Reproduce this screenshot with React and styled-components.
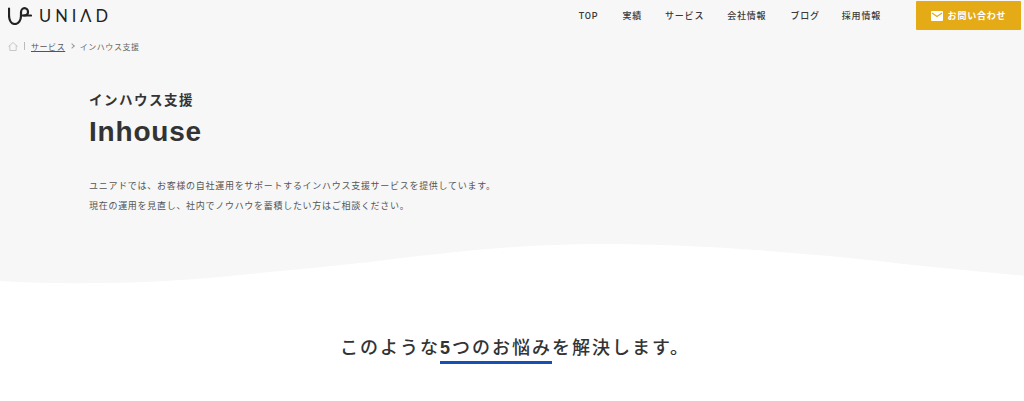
import React from 'react'
import styled, { createGlobalStyle } from 'styled-components'

const GlobalStyle = createGlobalStyle`
  html, body {
    margin: 0;
    padding: 0;
    background: #fff;
    overflow: hidden;
  }
  body {
    font-family: "Liberation Sans", "Noto Sans CJK JP", sans-serif;
    color: #333;
  }
`

const Hero = styled.div`
  background: #f7f7f7;
`

const Header = styled.header`
  display: flex;
  align-items: flex-start;
  justify-content: space-between;
  height: 31px;
  padding: 1px 3px 0 8px;
  box-sizing: border-box;
`

const Logo = styled.a`
  display: flex;
  align-items: center;
  gap: 7px;
  height: 30px;
  color: #222;
`

const LogoText = styled.span`
  font-family: "Lato", sans-serif;
  font-size: 16.5px;
  font-weight: 400;
  letter-spacing: 4px;
`

const Nav = styled.nav`
  display: flex;
  align-items: center;
  height: 29px;
`

const NavItem = styled.a`
  font-family: "Roboto", "Noto Sans CJK JP", sans-serif;
  font-size: 9px;
  font-weight: 500;
  letter-spacing: 0.8px;
  color: #3a3a3a;
  margin-right: ${(p) => p.$gap}px;
  white-space: nowrap;
`

const ContactButton = styled.a`
  display: flex;
  align-items: center;
  justify-content: center;
  gap: 5px;
  width: 105px;
  height: 29px;
  background: #e5ab17;
  color: #fff;
  font-size: 9px;
  font-weight: 700;
  letter-spacing: 0.8px;
  border-radius: 1px;
`

const Breadcrumb = styled.div`
  display: flex;
  align-items: center;
  height: 30px;
  padding-left: 8px;
  font-size: 8px;
  letter-spacing: 0.55px;
  color: #666;
`

const Divider = styled.span`
  width: 1px;
  height: 8px;
  background: #bbb;
  margin: 0 6px;
`

const CrumbLink = styled.a`
  color: #555;
  text-decoration: underline;
`

const Chevron = styled.span`
  width: 3px;
  height: 3px;
  border-top: 1px solid #999;
  border-right: 1px solid #999;
  transform: rotate(45deg);
  margin: 0 5.5px 0 5px;
`

const HeroBody = styled.div`
  padding: 30px 0 0 89px;
`

const SubTitle = styled.div`
  font-size: 13.5px;
  font-weight: 700;
  line-height: 20px;
  letter-spacing: 1.5px;
  color: #333;
`

const Title = styled.h1`
  margin: 3px 0 0;
  font-size: 28px;
  font-weight: 700;
  line-height: 36px;
  letter-spacing: 0.8px;
  color: #333;
`

const Lead = styled.p`
  margin: 26px 0 0;
  font-size: 9px;
  line-height: 20px;
  letter-spacing: 0.71px;
  color: #555;
`

const Wave = styled.svg`
  display: block;
  width: 100%;
  height: 50px;
  margin-top: 24px;
`

const Section = styled.section`
  background: #fff;
  display: flex;
  justify-content: center;
  padding: 45px 0 0 6px;
`

const Heading = styled.h2`
  margin: 0;
  font-size: 18px;
  font-weight: 500;
  line-height: 26px;
  letter-spacing: 2px;
  color: #333;
`

const Marked = styled.span`
  display: inline-block;
  border-bottom: 3px solid #1650b4;
`

const Digit = styled.b`
  font-weight: 700;
`

const navItems = [
  { label: 'TOP', gap: 24 },
  { label: '実績', gap: 23 },
  { label: 'サービス', gap: 23 },
  { label: '会社情報', gap: 24 },
  { label: 'ブログ', gap: 22 },
  { label: '採用情報', gap: 35 },
]

export default function App() {
  return (
    <>
      <GlobalStyle />
      <Hero>
        <Header>
          <Logo>
            <svg width="24" height="18" viewBox="8 7 24 18" fill="none" stroke="#222" strokeWidth="2.2" strokeLinecap="round">
              <path d="M9 8.500V15C9 20.500 11.500 24 15 24C18.500 24 21 20.500 21 16V12.500C21 10 22.500 8.200 24.500 8.200C26.500 8.200 28 10 28 12C28 14.500 26 15.500 24 15.500" />
              <path d="M21 15.500H31" />
            </svg>
            <LogoText>UNIΛD</LogoText>
          </Logo>
          <Nav>
            {navItems.map((item) => (
              <NavItem key={item.label} $gap={item.gap}>{item.label}</NavItem>
            ))}
            <ContactButton>
              <svg width="12" height="10" viewBox="0 0 12 10">
                <rect width="12" height="10" rx="1" fill="#fff" />
                <path d="M1 2l5 3.500L11 2" fill="none" stroke="#e5ab17" strokeWidth="1.200" />
              </svg>
              お問い合わせ
            </ContactButton>
          </Nav>
        </Header>
        <Breadcrumb>
          <svg width="10" height="9" viewBox="0 0 10 9" fill="none" stroke="#bbb" strokeWidth="0.8">
            <path d="M0.500 4.500L5 0.500L9.500 4.500M1.800 3.500v5h6.400v-5" />
          </svg>
          <Divider />
          <CrumbLink>サービス</CrumbLink>
          <Chevron />
          インハウス支援
        </Breadcrumb>
        <HeroBody>
          <SubTitle>インハウス支援</SubTitle>
          <Title>Inhouse</Title>
          <Lead>
            ユニアドでは、お客様の自社運用をサポートするインハウス支援サービスを提供しています。
            <br />
            現在の運用を見直し、社内でノウハウを蓄積したい方はご相談ください。
          </Lead>
        </HeroBody>
        <Wave viewBox="0 0 1024 50" preserveAspectRatio="none">
          <path
            d="M0 41C40 43.500 80 43.500 120 42.700C170 41.500 210 38 250 34C290 30 330 26.500 370 22C450 12 520 4 600 4C700 4 810 13 904 24C944 28.500 984 32 1024 35.700V50H0Z"
            fill="#fff"
          />
        </Wave>
      </Hero>
      <Section>
        <Heading>
          このような<Marked><Digit>5</Digit>つのお悩み</Marked>を解決します。
        </Heading>
      </Section>
    </>
  )
}
